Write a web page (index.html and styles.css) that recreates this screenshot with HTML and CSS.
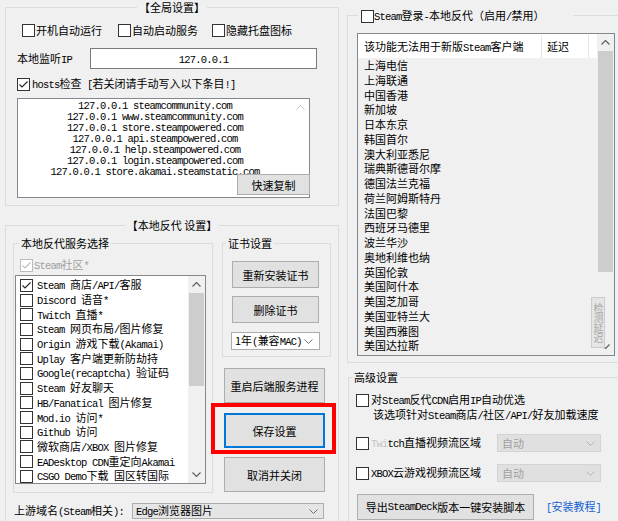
FILE: index.html
```html
<!DOCTYPE html>
<html lang="zh-CN">
<head>
<meta charset="utf-8">
<title>设置</title>
<link rel="stylesheet" href="styles.css">
</head>
<body>
<div class="app">
  <div class="col-left">
    <div class="group global">
      <div class="gtitle center">【全局设置】</div>
      <div class="opts">
        <div class="cb w96"><span class="box"></span><span class="t">开机自动运行</span></div>
        <div class="cb w94"><span class="box"></span><span class="t">自动启动服务</span></div>
        <div class="cb"><span class="box"></span><span class="t">隐藏托盘图标</span></div>
      </div>
      <div class="iprow">
        <span class="lbl">本地监听<span class="e">IP</span></span>
        <div class="edit"><span class="e">127.0.0.1</span></div>
      </div>
      <div class="hostsrow">
        <div class="cb g2"><span class="box"><svg width="11" height="11" viewBox="0 0 11 11"><path d="M1.5 5.5 4 8 9.5 2.5" fill="none" stroke="#222" stroke-width="1.1"/></svg></span><span class="t"><span class="e">hosts</span>检查<span class="e"> [</span>若关闭请手动写入以下条目<span class="e">!]</span></span></div>
      </div>
      <div class="hostsbox">
        <div class="hosts-text">
          <div>127.0.0.1 steamcommunity.com</div>
          <div>127.0.0.1 www.steamcommunity.com</div>
          <div>127.0.0.1 store.steampowered.com</div>
          <div>127.0.0.1 api.steampowered.com</div>
          <div>127.0.0.1 help.steampowered.com</div>
          <div>127.0.0.1 login.steampowered.com</div>
          <div>127.0.0.1 store.akamai.steamstatic.com</div>
        </div>
        <div class="hosts-sb"><svg width="9" height="5" viewBox="0 0 9 5"><path d="M.5 4.5 4.5.5l4 4" fill="none" stroke="#c4c4c4"/></svg></div>
        <div class="btn qcopy">快速复制</div>
      </div>
    </div>

    <div class="group local">
      <div class="gtitle center">【本地反代 设置】</div>
      <div class="local-body">
        <div class="group svc">
          <div class="gtitle">本地反代服务选择</div>
          <div class="cb community"><span class="box dis"><svg width="11" height="11" viewBox="0 0 11 11"><path d="M1.5 5.5 4 8 9.5 2.5" fill="none" stroke="#bcbcbc" stroke-width="1.1"/></svg></span><span class="t"><span class="e">Steam</span>社区<span class="e">*</span></span></div>
          <div class="listbox">
            <div class="items">
              <div class="item"><span class="box"><svg width="11" height="11" viewBox="0 0 11 11"><path d="M1.5 5.5 4 8 9.5 2.5" fill="none" stroke="#222" stroke-width="1.1"/></svg></span><span class="t"><span class="e">Steam </span>商店<span class="e">/API/</span>客服</span></div>
              <div class="item"><span class="box"></span><span class="t"><span class="e">Discord </span>语音<span class="e">*</span></span></div>
              <div class="item"><span class="box"></span><span class="t"><span class="e">Twitch </span>直播<span class="e">*</span></span></div>
              <div class="item"><span class="box"></span><span class="t"><span class="e">Steam </span>网页布局<span class="e">/</span>图片修复</span></div>
              <div class="item"><span class="box"></span><span class="t"><span class="e">Origin </span>游戏下载<span class="e">(Akamai)</span></span></div>
              <div class="item"><span class="box"></span><span class="t"><span class="e">Uplay </span>客户端更新防劫持</span></div>
              <div class="item"><span class="box"></span><span class="t"><span class="e">Google(recaptcha) </span>验证码</span></div>
              <div class="item"><span class="box"></span><span class="t"><span class="e">Steam </span>好友聊天</span></div>
              <div class="item"><span class="box"></span><span class="t"><span class="e">HB/Fanatical </span>图片修复</span></div>
              <div class="item"><span class="box"></span><span class="t"><span class="e">Mod.io </span>访问<span class="e">*</span></span></div>
              <div class="item"><span class="box"></span><span class="t"><span class="e">Github </span>访问</span></div>
              <div class="item"><span class="box"></span><span class="t">微软商店<span class="e">/XBOX </span>图片修复</span></div>
              <div class="item"><span class="box"></span><span class="t"><span class="e">EADesktop CDN</span>重定向<span class="e">Akamai</span></span></div>
              <div class="item"><span class="box"></span><span class="t"><span class="e">CSGO Demo</span>下载<span class="e"> </span>国区转国际</span></div>
            </div>
            <div class="vsb">
              <div class="arrow"><svg width="9" height="5" viewBox="0 0 9 5"><path d="M.5 4.5 4.5.5l4 4" fill="none" stroke="#606060" stroke-width="1.2"/></svg></div>
              <div class="thumb t1"></div>
              <div class="track"></div>
              <div class="arrow"><svg width="9" height="5" viewBox="0 0 9 5"><path d="M.5.5l4 4 4-4" fill="none" stroke="#606060" stroke-width="1.2"/></svg></div>
            </div>
          </div>
        </div>
        <div class="side">
          <div class="group cert">
            <div class="gtitle">证书设置</div>
            <div class="btn b1">重新安装证书</div>
            <div class="btn b2">删除证书</div>
            <div class="combo c1"><span class="t">1年<span class="e">(</span>兼容<span class="e">MAC)</span></span><svg width="9" height="5" viewBox="0 0 9 5"><path d="M.5.5l4 4 4-4" fill="none" stroke="#707070"/></svg></div>
          </div>
          <div class="btn act a1">重启后端服务进程</div>
          <div class="save-wrap">
            <div class="btn act save">保存设置</div>
            <div class="redmark"></div>
          </div>
          <div class="btn act a3">取消并关闭</div>
        </div>
      </div>
      <div class="upstream">
        <span class="lbl">上游域名<span class="e">(Steam</span>相关<span class="e">):</span></span>
        <div class="combo c2"><span class="t"><span class="e">Edge</span>浏览器图片</span><svg width="9" height="5" viewBox="0 0 9 5"><path d="M.5.5l4 4 4-4" fill="none" stroke="#707070"/></svg></div>
      </div>
    </div>
  </div>

  <div class="col-right">
    <div class="group steam">
      <div class="gtitle ctitle"><span class="box"></span><span class="t"><span class="e">Steam</span>登录<span class="e">-</span>本地反代（启用<span class="e">/</span>禁用）</span></div>
      <div class="lv">
        <div class="lv-main">
          <div class="lv-head">
            <div class="h1">该功能无法用于新版<span class="e">Steam</span>客户端</div>
            <div class="h2">延迟</div>
            <div class="h3"></div>
          </div>
          <div class="lv-body">
            <div class="lv-row">上海电信</div>
            <div class="lv-row">上海联通</div>
            <div class="lv-row">中国香港</div>
            <div class="lv-row">新加坡</div>
            <div class="lv-row">日本东京</div>
            <div class="lv-row">韩国首尔</div>
            <div class="lv-row">澳大利亚悉尼</div>
            <div class="lv-row">瑞典斯德哥尔摩</div>
            <div class="lv-row">德国法兰克福</div>
            <div class="lv-row">荷兰阿姆斯特丹</div>
            <div class="lv-row">法国巴黎</div>
            <div class="lv-row">西班牙马德里</div>
            <div class="lv-row">波兰华沙</div>
            <div class="lv-row">奥地利维也纳</div>
            <div class="lv-row">英国伦敦</div>
            <div class="lv-row">美国阿什本</div>
            <div class="lv-row">美国芝加哥</div>
            <div class="lv-row">美国亚特兰大</div>
            <div class="lv-row">美国西雅图</div>
            <div class="lv-row">美国达拉斯</div>
          </div>
        </div>
        <div class="vsb">
          <div class="arrow"><svg width="9" height="5" viewBox="0 0 9 5"><path d="M.5 4.5 4.5.5l4 4" fill="none" stroke="#606060" stroke-width="1.2"/></svg></div>
          <div class="thumb t2"></div>
          <div class="track"></div>
          <div class="arrow"><svg width="9" height="5" viewBox="0 0 9 5"><path d="M.5.5l4 4 4-4" fill="none" stroke="#606060" stroke-width="1.2"/></svg></div>
        </div>
        <div class="detect">检测延迟</div>
      </div>
    </div>

    <div class="group adv">
      <div class="gtitle">高级设置</div>
      <div class="cb g2 r1"><span class="box"></span><span class="t">对<span class="e">Steam</span>反代<span class="e">CDN</span>启用<span class="e">IP</span>自动优选</span></div>
      <div class="note">该选项针对<span class="e">Steam</span>商店<span class="e">/</span>社区<span class="e">/API/</span>好友加载速度</div>
      <div class="r2">
        <div class="cb g2 lblw"><span class="box"></span><span class="t"><span class="e faint">Twi</span><span class="e">tch</span>直播视频流区域</span></div>
        <div class="combo dis"><span class="t">自动</span><svg width="9" height="5" viewBox="0 0 9 5"><path d="M.5.5l4 4 4-4" fill="none" stroke="#b4b4b4"/></svg></div>
      </div>
      <div class="r2 r3">
        <div class="cb g2 lblw"><span class="box"></span><span class="t"><span class="e">XBOX</span>云游戏视频流区域</span></div>
        <div class="combo dis"><span class="t">自动</span><svg width="9" height="5" viewBox="0 0 9 5"><path d="M.5.5l4 4 4-4" fill="none" stroke="#b4b4b4"/></svg></div>
      </div>
      <div class="export">
        <div class="btn">导出<span class="e">SteamDeck</span>版本一键安装脚本</div>
        <span class="link"><span class="e">[</span>安装教程<span class="e">]</span></span>
      </div>
    </div>
  </div>
</div>
</body>
</html>
```

FILE: styles.css
```css
* { box-sizing: border-box; }
html, body { margin: 0; padding: 0; }
body {
  width: 618px;
  height: 521px;
  overflow: hidden;
  background: #f0f0f0;
  font-family: "Noto Sans CJK SC", "Noto Sans", sans-serif;
  font-size: 11px;
  line-height: 14px;
  color: #000;
}
.e {
  font-family: "Liberation Mono", "Noto Sans CJK SC", monospace;
  font-size: 10.5px;
  letter-spacing: -0.8px;
}
.faint { color: #c4c4c4; }

.app { display: flex; align-items: flex-start; height: 521px; overflow: hidden; }
.col-left { width: 334px; margin-left: 5px; padding-top: 7px; flex: none; }
.col-right { width: 280px; margin-left: 8px; padding-top: 15px; flex: none; }

.group { border: 1px solid #dcdcdc; }
.gtitle {
  margin-top: -8px;
  height: 14px;
  width: fit-content;
  padding: 0 2px;
  background: #f0f0f0;
  white-space: nowrap;
}
.gtitle.center { margin-left: auto; margin-right: auto; }

/* checkboxes */
.cb { display: flex; align-items: center; gap: 1px; white-space: nowrap; }
.cb.g2 { gap: 2px; }
.box {
  width: 13px;
  height: 13px;
  flex: none;
  border: 1px solid #333;
  background: #fff;
  display: flex;
}
.box svg { display: block; }
.box.dis { border-color: #bcbcbc; }
.t { white-space: nowrap; }

/* buttons */
.btn {
  display: flex;
  align-items: center;
  justify-content: center;
  background: #e1e1e1;
  border: 1px solid #adadad;
  white-space: nowrap;
}
.combo {
  display: flex;
  align-items: center;
  justify-content: space-between;
  padding: 0 5px 0 3px;
  background: #e5e5e5;
  border: 1px solid #acacac;
  white-space: nowrap;
}
.combo svg { flex: none; }

/* global */
.global { height: 199px; }
.opts { display: flex; align-items: center; height: 16px; margin-top: 8px; padding-left: 16px; }
.w96 { width: 96px; }
.w94 { width: 94px; }
.iprow { display: flex; align-items: center; margin-top: 10px; padding-left: 11px; }
.iprow .lbl { width: 73px; }
.edit {
  width: 227px;
  height: 21px;
  border: 1px solid #7a7a7a;
  background: #fff;
  text-align: center;
  line-height: 19px;
}
.hostsrow { display: flex; align-items: center; height: 16px; margin-top: 7px; padding-left: 11px; }
.hostsbox {
  position: relative;
  display: flex;
  margin: 6px 0 0 11px;
  width: 293px;
  height: 100px;
  border: 1px solid #828790;
  background: #fff;
}
.hosts-text {
  flex: 1;
  padding-top: 2px;
  text-align: center;
  font-family: "Liberation Mono", monospace;
  font-size: 10.5px;
  letter-spacing: -0.8px;
  line-height: 11px;
  white-space: nowrap;
  overflow: hidden;
}
.hosts-sb { width: 17px; flex: none; display: flex; justify-content: center; padding-top: 6px; }
.hosts-sb svg { display: block; }
.qcopy { position: absolute; right: -1px; bottom: 2px; width: 73px; height: 21px; }

/* local */
.local { margin-top: 19px; height: 300px; }
.local-body { display: flex; align-items: flex-start; margin-top: 11px; }
.svc { width: 200px; height: 250px; margin-left: 7px; flex: none; }
.svc .gtitle { margin-left: 5px; }
.community { height: 16px; margin-top: 7px; padding-left: 6px; color: #a0a0a0; }
.listbox {
  display: flex;
  margin: 2px 0 0 1px;
  width: 191px;
  height: 209px;
  border: 1px solid #828790;
  background: #fff;
}
.items { flex: 1; padding-top: 2px; overflow: hidden; }
.item { display: flex; align-items: center; gap: 4px; height: 14.7px; padding-left: 4px; white-space: nowrap; }

.vsb { width: 17px; flex: none; display: flex; flex-direction: column; background: #f0f0f0; }
.vsb .arrow { height: 17px; flex: none; display: flex; align-items: center; justify-content: center; }
.vsb .arrow svg { display: block; }
.vsb .thumb { flex: none; margin: 0 1px; background: #cdcdcd; }
.vsb .track { flex: 1; }
.thumb.t1 { height: 93px; }
.thumb.t2 { height: 221px; }

.side { width: 109px; margin-left: 9px; flex: none; }
.cert { width: 109px; height: 114px; }
.cert .gtitle { margin-left: 3px; }
.cert .btn { width: 87px; height: 27px; margin-left: 9px; }
.cert .b1 { margin-top: 11px; }
.cert .b2 { margin-top: 8px; }
.combo.c1 { width: 89px; height: 18px; margin: 9px 0 0 8px; background: #fff; padding-right: 6px; }
.btn.act { width: 101px; height: 35px; margin-left: 2px; }
.btn.a1 { margin-top: 11px; }
.save-wrap { position: relative; margin-top: 10px; }
.btn.save { border: 1px solid #0078d7; box-shadow: inset 0 0 0 1px #0078d7; }
.redmark {
  position: absolute;
  left: -11px;
  top: -10px;
  width: 125px;
  height: 51px;
  border: 4px solid #f00;
}
.btn.a3 { margin-top: 9px; }

.upstream { display: flex; align-items: center; margin-top: 10px; padding-left: 8px; }
.upstream .lbl { width: 118px; white-space: nowrap; }
.combo.c2 { width: 192px; height: 16px; }

/* right */
.steam { width: 280px; height: 348px; }
.ctitle { display: flex; align-items: center; height: 16px; width: 215px; margin-left: 10px; padding: 0 0 0 3px; }
.lv {
  position: relative;
  display: flex;
  margin: 9px 0 0 9px;
  width: 258px;
  height: 323px;
  border: 1px solid #828790;
  background: #f0f0f0;
}
.lv-main { flex: 1; display: flex; flex-direction: column; min-width: 0; }
.lv-head { display: flex; height: 24px; background: #fff; padding-top: 1px; line-height: 23px; flex: none; }
.lv-head .h1 { width: 184px; padding-left: 6px; border-right: 1px solid #e5e5e5; white-space: nowrap; }
.lv-head .h2 { width: 47px; padding-left: 5px; border-right: 1px solid #e5e5e5; }
.lv-head .h3 { flex: 1; }
.lv-row { height: 14.75px; line-height: 14.75px; padding-left: 6px; white-space: nowrap; }
.detect {
  position: absolute;
  left: 233px;
  top: 263px;
  width: 14px;
  height: 51px;
  background: #e5e5e5;
  border: 1px solid #cccccc;
  color: #a8a8a8;
  writing-mode: vertical-rl;
  font-size: 10px;
  line-height: 12px;
  display: flex;
  align-items: center;
  justify-content: center;
}

.adv { width: 280px; height: 150px; margin: 14px 0 0 1px; }
.adv .gtitle { margin-left: 3px; }
.r1 { height: 16px; margin-top: 8px; padding-left: 7px; }
.note { padding-left: 24px; margin-top: -1px; white-space: nowrap; }
.r2 { display: flex; align-items: center; height: 18px; margin-top: 11px; padding-left: 7px; }
.r2.r3 { margin-top: 12px; }
.lblw { width: 141px; }
.combo.dis { width: 104px; height: 18px; background: #e0e0e0; border-color: #d4d4d4; color: #a0a0a0; padding-left: 4px; }
.export { display: flex; align-items: center; margin: 12px 0 0 8px; }
.export .btn { width: 177px; height: 26px; }
.link { margin-left: 12px; color: #1560d0; white-space: nowrap; }
```
